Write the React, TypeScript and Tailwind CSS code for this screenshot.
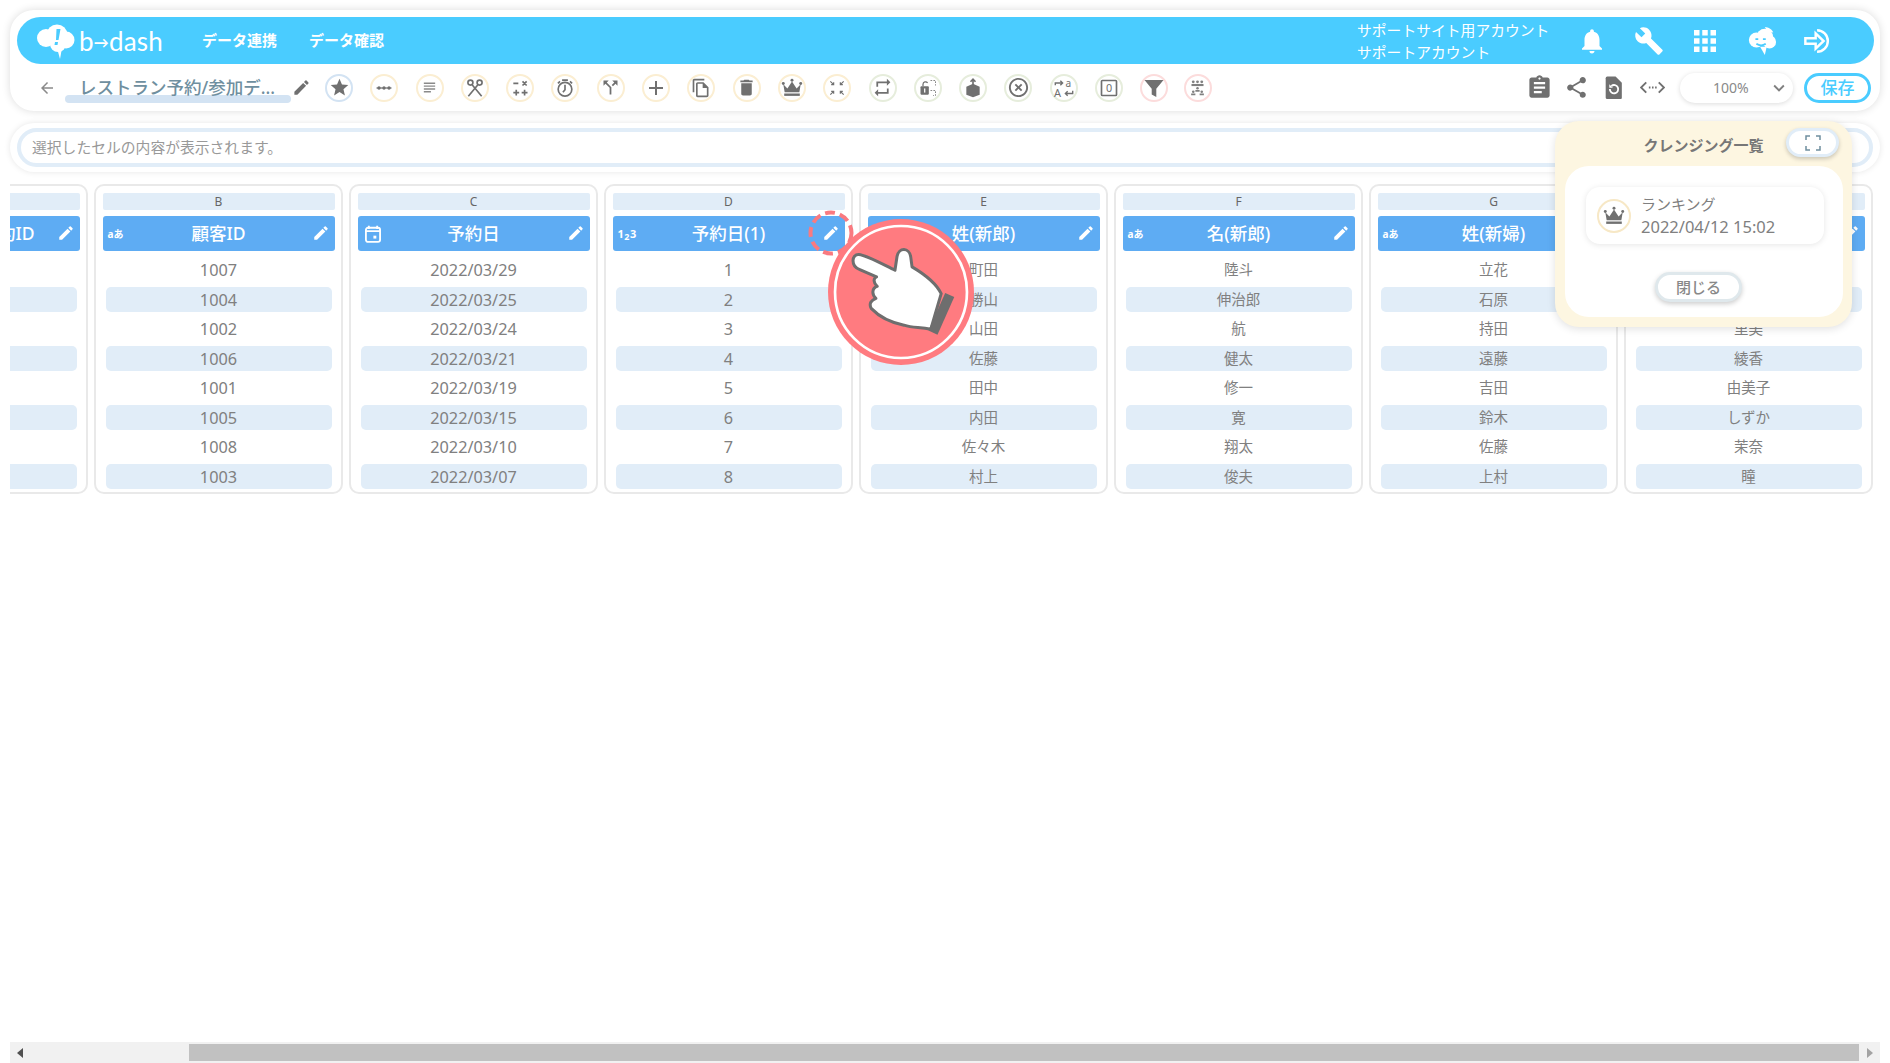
import type { ReactNode } from 'react'
import { MdAdd, MdApps, MdArrowBack, MdAssignment, MdBuild, MdCallSplit, MdDelete, MdEdit, MdHighlightOff, MdKeyboardArrowDown, MdNotifications, MdOutlineFileCopy, MdRepeat, MdShare, MdStar, MdSubject } from 'react-icons/md'

const BLUE = 'border-[#d3e3f3]'
const YELLOW = 'border-[#fbeed2]'
const GREEN = 'border-[#e6eddc]'
const PINK = 'border-[#fcdcdc]'

const Svg = ({ children }: { children: ReactNode }) => (
  <svg viewBox="0 0 24 24" className="w-[20px] h-[20px]" fill="none" stroke="#707070" strokeWidth="2">{children}</svg>
)

const CrownIcon = ({ className }: { className: string }) => (
  <svg viewBox="0 0 24 24" className={className} fill="#707070">
    <circle cx="2.5" cy="7" r="1.6" /><circle cx="12" cy="3.5" r="1.6" /><circle cx="21.500" cy="7" r="1.6" />
    <path d="M2.500 8 7 12.500 12 5l5 7.500L21.500 8 20 16.500H4z" />
    <rect x="3.500" y="18" width="17" height="2.600" />
  </svg>
)

const toolbar: { border: string; icon: ReactNode }[] = [
  { border: BLUE, icon: <MdStar size={21} color="#707070" /> },
  { border: YELLOW, icon: <Svg><path d="M3 12h18" strokeWidth="1.500" /><circle cx="6" cy="12" r="2" fill="#707070" stroke="none" /><circle cx="12" cy="12" r="2" fill="#707070" stroke="none" /><circle cx="18" cy="12" r="2" fill="#707070" stroke="none" /></Svg> },
  { border: YELLOW, icon: <MdSubject size={17} color="#8a8a8a" /> },
  { border: YELLOW, icon: <Svg><circle cx="6.500" cy="5.500" r="3" /><circle cx="17.500" cy="5.500" r="3" /><path d="M8.500 8 20 22M15.500 8 4 22" /></Svg> },
  { border: YELLOW, icon: <Svg><path d="M4 6.500h6M15 4l5 5M20 4l-5 5M4 17.500h7M7.500 14v7M14 17.500h7M17.500 14v7" /></Svg> },
  { border: YELLOW, icon: <Svg><circle cx="12" cy="13.500" r="8.200" /><path d="M12 8v6l-2.500 3M8.500 2.500h7M3.500 6.500l2.500-2.500M20.500 6.500 18 4" /></Svg> },
  { border: YELLOW, icon: <MdCallSplit size={21} color="#707070" /> },
  { border: YELLOW, icon: <MdAdd size={24} color="#707070" /> },
  { border: YELLOW, icon: <MdOutlineFileCopy size={20} color="#707070" /> },
  { border: YELLOW, icon: <MdDelete size={21} color="#707070" /> },
  { border: YELLOW, icon: <CrownIcon className="w-[22px] h-[22px]" /> },
  { border: YELLOW, icon: <Svg><path d="M4 4l4 4M8 5v3H5M20 4l-4 4M16 5v3h3M4 20l4-4M8 19v-3H5M20 20l-4-4M16 19v-3h3" strokeWidth="1.400" /></Svg> },
  { border: GREEN, icon: <MdRepeat size={21} color="#707070" /> },
  { border: GREEN, icon: <Svg><path d="M6 10V7.500a3 3 0 0 1 5.500-1.500" strokeWidth="1.500" /><rect x="3" y="10" width="10" height="10" rx="1" fill="#707070" stroke="none" /><rect x="7.300" y="12.500" width="1.500" height="5" fill="#fff" stroke="none" /><path d="M15 3h6v6M15 15h6v6h-3" strokeWidth="1" strokeDasharray="2 1.500" /></Svg> },
  { border: GREEN, icon: <Svg><path d="M4 10.500 12 7l8 3.500V20l-8 3-8-3z" fill="#707070" stroke="none" /><path d="M12 10V2M9 4.500 12 1.500l3 3" /></Svg> },
  { border: GREEN, icon: <MdHighlightOff size={23} color="#707070" /> },
  { border: GREEN, icon: <svg viewBox="0 0 24 24" className="w-[22px] h-[22px]" fill="none" stroke="#707070" strokeWidth="1.500"><path d="M2.500 9V6.500h8M8 4l2.500 2.500L8 9M21.500 15v3h-8M16 15.500 13.500 18l2.500 2.500" /><text x="13.500" y="11" fontSize="11" fill="#707070" stroke="none">a</text><text x="1" y="22" fontSize="12" fill="#707070" stroke="none">A</text></svg> },
  { border: GREEN, icon: <svg viewBox="0 0 24 24" className="w-[20px] h-[20px]" fill="none" stroke="#707070" strokeWidth="2"><rect x="3" y="3" width="18" height="18" rx="1" /><text x="12" y="17" textAnchor="middle" fontSize="13" fill="#707070" stroke="none">0</text></svg> },
  { border: PINK, icon: <svg viewBox="0 0 24 24" className="w-[24px] h-[24px]" fill="#707070"><path d="M2.500 4h19l-7.200 8.800V21l-4.600-2.500v-5.700z" /></svg> },
  { border: PINK, icon: <svg viewBox="0 0 24 24" className="w-[17px] h-[17px]" fill="#808080"><circle cx="6" cy="4" r="2" /><circle cx="12" cy="4" r="2" /><circle cx="18" cy="4" r="2" /><path d="M3.500 7h17v3h-17z" /><circle cx="12" cy="13" r="1.800" /><path d="M9 15.500h6V18H9z" /><circle cx="6" cy="18" r="1.800" /><circle cx="18" cy="18" r="1.800" /><path d="M3 20.500h6V23H3zM15 20.500h6V23h-6z" /></svg> },
]

const TextType = () => <span className="text-[10px] font-bold leading-none">aあ</span>
const NumType = () => <span className="text-[11px] font-bold leading-none tracking-[0.5px]">1<sub className="text-[9px]">2</sub>3</span>
const DateType = () => (
  <svg viewBox="0 0 24 24" className="w-[20px] h-[20px]" fill="none" stroke="#fff" strokeWidth="2.200">
    <path d="M3.500 8.500h17M7 2v4M17 2v4" /><rect x="3.500" y="4.500" width="17" height="17" rx="2.500" /><rect x="12.500" y="14" width="3.500" height="3.500" fill="#fff" stroke="none" />
  </svg>
)

type Col = { letter: string; title: ReactNode; type: ReactNode; rows: string[]; numeric?: boolean }

const columns: Col[] = [
  { letter: 'B', title: '顧客ID', type: <TextType />, numeric: true, rows: ['1007', '1004', '1002', '1006', '1001', '1005', '1008', '1003'] },
  { letter: 'C', title: '予約日', type: <DateType />, numeric: true, rows: ['2022/03/29', '2022/03/25', '2022/03/24', '2022/03/21', '2022/03/19', '2022/03/15', '2022/03/10', '2022/03/07'] },
  { letter: 'D', title: '予約日(1)', type: <NumType />, numeric: true, rows: ['1', '2', '3', '4', '5', '6', '7', '8'] },
  { letter: 'E', title: '姓(新郎)', type: <TextType />, rows: ['町田', '勝山', '山田', '佐藤', '田中', '内田', '佐々木', '村上'] },
  { letter: 'F', title: '名(新郎)', type: <TextType />, rows: ['陸斗', '伸治郎', '航', '健太', '修一', '寛', '翔太', '俊夫'] },
  { letter: 'G', title: '姓(新婦)', type: <TextType />, rows: ['立花', '石原', '持田', '遠藤', '吉田', '鈴木', '佐藤', '上村'] },
  { letter: 'H', title: '名(新婦)', type: <TextType />, rows: ['美咲', '真央', '里美', '綾香', '由美子', 'しずか', '茉奈', '瞳'] },
]

function Column({ letter, title, type, rows, numeric }: Col) {
  return (
    <div className="w-[249px] h-[310px] shrink-0 rounded-[10px] border-2 border-[#e9e9e9] pt-[7px] px-[6.5px]">
      <div className="h-[17px] rounded-[2px] bg-[#e1edf8] flex items-center justify-center text-[12px] leading-none text-[#666]">{letter}</div>
      <div className="relative mt-[6px] h-[35px] rounded-[3px] bg-[#5eacf3] text-white flex items-center justify-center text-[17.500px] font-medium">
        <span className="absolute left-[5px] top-0 h-full flex items-center">{type}</span>
        {title}
        <MdEdit size={18} className="absolute right-[5px] top-[8px]" />
      </div>
      <div className="mt-[4.500px]">
        {rows.map((r, i) => (
          <div key={i} className="h-[29.5px] flex items-center">
            <div className={`w-full mx-[3px] h-[25px] rounded-[5px] flex items-center justify-center text-[#808080] ${numeric ? 'text-[16.300px]' : 'text-[14.500px]'} ${i % 2 === 1 ? 'bg-[#e1edf8]' : ''}`}>{r}</div>
          </div>
        ))}
      </div>
    </div>
  )
}

export default function App() {
  return (
    <div className="relative w-[1890px] h-[1063px] overflow-hidden bg-white flex flex-col [font-family:'Noto_Sans','Noto_Sans_CJK_JP',sans-serif]">
      {/* Header card */}
      <div className="mt-[10px] ml-[10px] w-[1870px] h-[101px] rounded-[24px] bg-white shadow-[0_0_8px_rgba(0,0,0,0.14)] px-[6px] pt-[7px]">
        <div className="h-[47px] ml-[1px] rounded-full bg-[#4accff] flex items-center text-white pl-[19px]">
          <svg viewBox="0 0 40 36" className="w-[40px] h-[36px] mt-[2px]" fill="#fff">
            <circle cx="10" cy="14" r="9" /><circle cx="21" cy="11" r="10.500" /><circle cx="30" cy="16" r="8.500" /><circle cx="22" cy="20" r="8" />
            <path d="M21 24l5 0-2 11z" />
            <path d="M20.500 5h4l-2 11h-2.500zM19 18h3l-.5 3h-3z" fill="#4accff" />
          </svg>
          <span className="ml-[3px] w-[86px] text-[26px] leading-none tracking-[0.2px] [font-family:Lato,sans-serif]">b<span className="text-[15px] font-bold align-[3px]">→</span>dash</span>
          <span className="ml-[37px] text-[15px] font-bold">データ連携</span>
          <span className="ml-[32px] text-[15px] font-bold">データ確認</span>
          <div className="ml-auto w-[192px] text-[14.800px] leading-[22px] mr-[28px] whitespace-nowrap">
            <div>サポートサイト用アカウント</div>
            <div>サポートアカウント</div>
          </div>
          <div className="flex items-center gap-[26.500px] mr-[41px]">
            <MdNotifications size={30} />
            <MdBuild size={30} />
            <MdApps size={30} className="scale-110" />
            <svg viewBox="0 0 32 32" className="w-[30px] h-[30px]" fill="#fff">
              <circle cx="10" cy="15" r="8" /><circle cx="19" cy="12" r="9" /><circle cx="24" cy="17" r="7" /><path d="M14 22h7l-2 9z" />
              <path d="M9 14h3M17 14h3M10 19c3 2 7 2 10 0" stroke="#4accff" strokeWidth="2" fill="none" />
              <path d="M19 1c4 0 8 3 9 6l-6-1z" />
            </svg>
            <svg viewBox="0 0 32 32" className="w-[30px] h-[30px]" fill="none" stroke="#fff" strokeWidth="2.600">
              <path d="M15 4.500a11.500 11.500 0 0 1 0 23" /><path d="M2.500 13h11V7.800L22 16l-8.500 8.200V19h-11z" />
            </svg>
          </div>
        </div>
        <div className="h-[47px] flex items-center">
          <MdArrowBack size={18} color="#8a8a8a" className="ml-[22px]" />
          <div className="relative ml-[9px] w-[226px] h-[30px] flex items-center pl-[14px] text-[17.500px] font-medium text-[#6f8f9f] whitespace-nowrap">
            <span className="absolute left-0 top-[22px] w-[226px] h-[8px] rounded-full bg-[#d3e3f3]" />
            <span className="relative">レストラン予約/参加デ...</span>
          </div>
          <MdEdit size={19} color="#707070" className="ml-[1px]" />
          <div className="ml-[14px] flex items-center gap-[17.300px]">
            {toolbar.map((t, i) => (
              <div key={i} className={`w-[28px] h-[28px] rounded-full border-2 ${t.border} flex items-center justify-center shrink-0 ${i === 19 ? '-ml-[2px]' : ''}`}>{t.icon}</div>
            ))}
          </div>
          <div className="ml-auto flex items-center mr-[3px]">
            <MdAssignment size={27} color="#707070" />
            <MdShare size={25} color="#707070" className="ml-[11px]" />
            <svg viewBox="0 0 24 24" className="w-[25px] h-[25px] ml-[12px]" fill="#707070">
              <path d="M6 1.500h8l6 6V22a1 1 0 0 1-1 1H6a1.500 1.500 0 0 1-1.500-1.500V3A1.500 1.500 0 0 1 6 1.500z" />
              <path d="M8.500 13.500a4 4 0 1 0 1.500-3" stroke="#fff" strokeWidth="1.800" fill="none" /><path d="M8 8.800v3.400h3.400z" fill="#fff" />
            </svg>
            <svg viewBox="0 0 24 24" className="w-[25px] h-[25px] ml-[14px]" fill="none" stroke="#707070" strokeWidth="1.800">
              <path d="M6 7l-5 5 5 5M18 7l5 5-5 5" /><path d="M8.500 12h1.500M11.500 12h1.500M14.500 12h1.500" />
            </svg>
            <div className="ml-[15px] w-[113px] h-[30px] rounded-full bg-white shadow-[0_1px_5px_rgba(0,0,0,0.14)] flex items-center text-[14px] text-[#8a8a8a]">
              <span className="ml-[33px]">100%</span>
              <MdKeyboardArrowDown size={22} color="#808080" className="ml-auto mr-[3px]" />
            </div>
            <div className="ml-[11px] w-[67px] h-[30px] rounded-full border-[3px] border-[#4accff] flex items-center justify-center text-[17px] font-medium text-[#4accff]">保存</div>
          </div>
        </div>
      </div>

      {/* Formula bar */}
      <div className="mt-[12px] ml-[10px] w-[1870px] h-[49px] rounded-full bg-white shadow-[0_0_6px_rgba(0,0,0,0.1)] px-[7px] py-[5px]">
        <div className="h-full rounded-full border-[4px] border-[#e1edf8] flex items-center pl-[11px] text-[14.800px] text-[#999]">選択したセルの内容が表示されます。</div>
      </div>

      {/* Sheet */}
      <div className="mt-[12px] ml-[10px] w-[1864px] overflow-hidden flex gap-[6px]">
        <div className="w-[249px] h-[310px] shrink-0 -ml-[171px] rounded-[10px] border-2 border-[#e9e9e9] pt-[7px] px-[6.5px]">
          <div className="h-[17px] rounded-[2px] bg-[#e1edf8]" />
          <div className="relative mt-[6px] h-[35px] rounded-[3px] bg-[#5eacf3] text-white flex items-center justify-end pr-[45px] text-[17.500px] font-medium">
            予約ID
            <MdEdit size={18} className="absolute right-[5px] top-[8px]" />
          </div>
          <div className="mt-[4.500px]">
            {[0, 1, 2, 3, 4, 5, 6, 7].map(i => (
              <div key={i} className="h-[29.5px] flex items-center">
                <div className={`w-full mx-[3px] h-[25px] rounded-[5px] ${i % 2 === 1 ? 'bg-[#e1edf8]' : ''}`} />
              </div>
            ))}
          </div>
        </div>
        {columns.map(c => <Column key={c.letter} {...c} />)}
      </div>

      {/* Scrollbar */}
      <div className="mt-auto ml-[10px] w-[1870px] h-[21px] bg-[#f1f1f1] flex items-center">
        <svg viewBox="0 0 6 10" className="w-[6px] h-[10px] ml-[7px]" fill="#505050"><path d="M6 0v10L0 5z" /></svg>
        <div className="ml-[166px] w-[1670px] h-[17px] bg-[#c1c1c1]" />
        <svg viewBox="0 0 6 10" className="w-[6px] h-[10px] ml-[8px]" fill="#a3a3a3"><path d="M0 0v10l6-5z" /></svg>
      </div>

      {/* Cleansing list popover */}
      <div className="absolute left-[1555px] top-[121px] w-[297px] h-[206px] rounded-[24px] bg-[#fdf6e1] shadow-[0_2px_8px_rgba(0,0,0,0.12)]">
        <div className="absolute left-0 right-0 top-[14px] text-center text-[15px] font-bold text-[#777] leading-[20px]">クレンジング一覧</div>
        <div className="absolute left-[231px] top-[7px] w-[53px] h-[29px] rounded-full bg-white border-[3px] border-[#e1edf8] shadow-[0_2px_4px_rgba(0,0,0,0.2)] flex items-center justify-center">
          <svg viewBox="0 0 16 16" className="w-[16px] h-[16px]" fill="none" stroke="#6f8f9f" strokeWidth="1.500"><path d="M1 5V1h4M11 1h4v4M15 11v4h-4M5 15H1v-4" /></svg>
        </div>
        <div className="absolute left-[10px] top-[45px] w-[278px] h-[151px] rounded-[24px] bg-white">
          <div className="absolute left-[21px] top-[21px] w-[238px] h-[57px] rounded-[14px] bg-white shadow-[0_1px_6px_rgba(0,0,0,0.1)] flex items-center">
            <div className="ml-[11px] w-[34px] h-[34px] rounded-full border-2 border-[#f7e8c6] flex items-center justify-center">
              <CrownIcon className="w-[22px] h-[22px]" />
            </div>
            <div className="ml-[10px] text-[#808080] whitespace-nowrap">
              <div className="text-[15px] leading-[22px]">ランキング</div>
              <div className="text-[16.500px] leading-[24px]">2022/04/12 15:02</div>
            </div>
          </div>
          <div className="absolute left-[90px] top-[106px] w-[87px] h-[30px] rounded-full bg-white border-[3px] border-[#dfe8ec] shadow-[0_2px_5px_rgba(0,0,0,0.2)] flex items-center justify-center text-[15px] font-medium text-[#888]">閉じる</div>
        </div>
      </div>

      {/* Click guide */}
      <svg viewBox="0 0 48 48" className="absolute left-[807px] top-[209px] w-[48px] h-[48px]" fill="none" stroke="#f97a80" strokeWidth="4" strokeDasharray="10 5">
        <circle cx="24" cy="24" r="20.500" />
      </svg>
      <svg viewBox="145 149 436 436" className="absolute left-[828px] top-[219px] w-[146px] h-[146px]">
        <circle cx="363" cy="367" r="218" fill="#ff7b80" />
        <circle cx="363" cy="367" r="197" fill="none" stroke="#fff" strokeWidth="8" />
        <path d="M237 255C262 258 310 285 345 302L351 262C356 232 388 234 392 262L396 292C440 318 470 345 483 372L452 478C420 470 400 476 372 466C330 458 295 438 274 416C266 400 275 392 288 386C275 375 276 355 292 350C280 340 280 326 290 322L240 300C212 290 215 254 237 255Z" fill="#fff" stroke="#6e6e6e" strokeWidth="9" strokeLinejoin="round" />
        <path d="M495 370 522 382 472 495 445 482Z" fill="#6e6e6e" />
      </svg>
    </div>
  )
}
